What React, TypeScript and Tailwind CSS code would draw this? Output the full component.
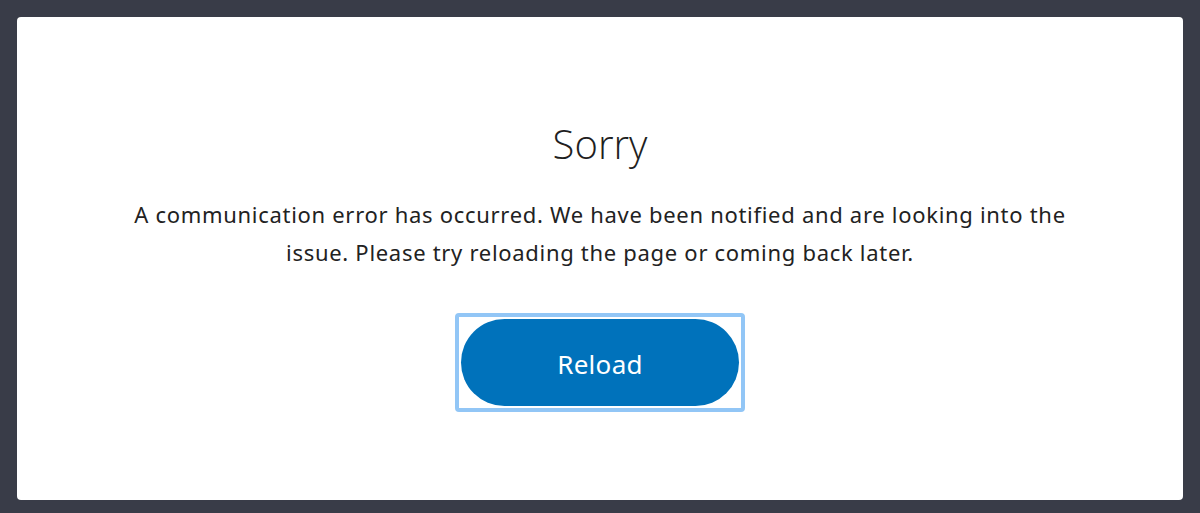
import React from "react";

export default function App() {
  return (
    <div className="w-[1200px] h-[513px] bg-[#393c48] p-[17px] pb-[13px] box-border" style={{ fontFamily: '"Noto Sans", "Open Sans", sans-serif' }}>
      <div className="w-full h-full bg-white rounded-[4px] flex flex-col items-center">
        <h1 className="mt-[102px] text-[40px] leading-[50px] font-light text-[#1f1f1f]" style={{ fontFamily: '"Open Sans", sans-serif' }}>Sorry</h1>
        <p className="mt-[26px] w-[960px] text-center text-[22px] leading-[38px] tracking-[0.7px] text-[#222]">
          A communication error has occurred. We have been notified and are looking into the issue. Please try reloading the page or coming back later.
        </p>
        <div className="mt-[42px] p-[2px] border-[4px] border-[#92c6f6] rounded-[4px]">
          <button className="w-[278px] h-[87px] pt-[4px] rounded-full bg-[#0072bb] text-white text-[26px] tracking-[0.3px] block">
            Reload
          </button>
        </div>
      </div>
    </div>
  );
}
